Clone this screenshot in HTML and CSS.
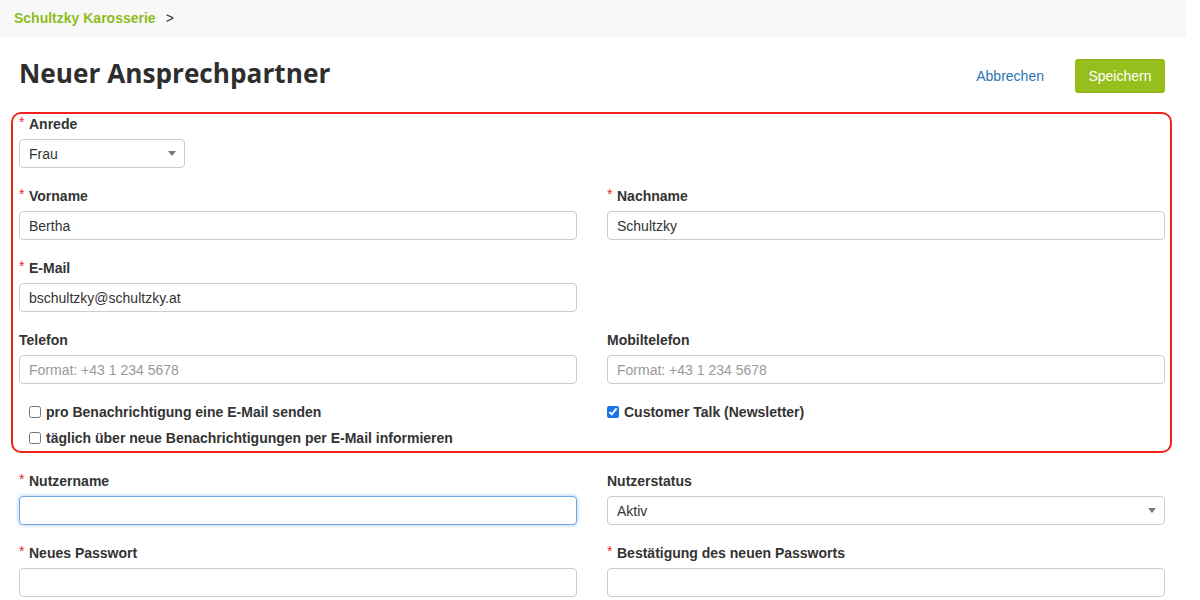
FILE: index.html
```html
<!DOCTYPE html>
<html lang="de">
<head>
    <meta charset="UTF-8">
    <meta name="viewport" content="width=device-width, initial-scale=1.0">
    <title>Neuer Ansprechpartner</title>
    <link rel="stylesheet" href="styles.css">
</head>
<body>
  <div class="page">
    <!-- Breadcrumb -->
    <div class="breadcrumb">
      <a class="breadcrumb-link" href="#">Schultzky Karosserie</a>
      <span class="breadcrumb-sep">&gt;</span>
    </div>

    <div class="content">
      <div class="page-header">
        <h1 class="page-title">Neuer Ansprechpartner</h1>
        <div class="page-actions">
          <a class="link-cancel" href="#">Abbrechen</a>
          <button class="btn-save" type="button">Speichern</button>
        </div>
      </div>

      <!-- Kontaktdaten -->
      <div class="highlight-box">
        <div class="field">
          <label class="field-label required">Anrede</label>
          <div class="select select--small">
            <span class="select-value">Frau</span>
            <span class="select-arrow"></span>
          </div>
        </div>

        <div class="row">
          <div class="field">
            <label class="field-label required">Vorname</label>
            <input class="input" type="text" value="Bertha">
          </div>
          <div class="field">
            <label class="field-label required">Nachname</label>
            <input class="input" type="text" value="Schultzky">
          </div>
        </div>

        <div class="row">
          <div class="field">
            <label class="field-label required">E-Mail</label>
            <input class="input" type="text" value="bschultzky@schultzky.at">
          </div>
          <div class="field"></div>
        </div>

        <div class="row">
          <div class="field">
            <label class="field-label">Telefon</label>
            <input class="input" type="text" placeholder="Format: +43 1 234 5678">
          </div>
          <div class="field">
            <label class="field-label">Mobiltelefon</label>
            <input class="input" type="text" placeholder="Format: +43 1 234 5678">
          </div>
        </div>

        <div class="row row--checks">
          <div class="checks checks--indent">
            <label class="check"><input type="checkbox"> pro Benachrichtigung eine E-Mail senden</label>
            <label class="check"><input type="checkbox"> täglich über neue Benachrichtigungen per E-Mail informieren</label>
          </div>
          <div class="checks">
            <label class="check"><input type="checkbox" checked> Customer Talk (Newsletter)</label>
          </div>
        </div>
      </div>

      <!-- Zugangsdaten -->
      <div class="row">
        <div class="field">
          <label class="field-label required">Nutzername</label>
          <input class="input input--focus" type="text">
        </div>
        <div class="field">
          <label class="field-label">Nutzerstatus</label>
          <div class="select">
            <span class="select-value">Aktiv</span>
            <span class="select-arrow"></span>
          </div>
        </div>
      </div>

      <div class="row">
        <div class="field">
          <label class="field-label required">Neues Passwort</label>
          <input class="input" type="password">
        </div>
        <div class="field">
          <label class="field-label required">Bestätigung des neuen Passworts</label>
          <input class="input" type="password">
        </div>
      </div>
    </div>
  </div>
</body>
</html>
```

FILE: styles.css
```css
html,
body {
  margin: 0;
  padding: 0;
  background: #fff;
  overflow: hidden;
}

body {
  font-family: "Liberation Sans", Arial, Helvetica, sans-serif;
  font-size: 14px;
  color: #333;
}

.page {
  width: 1186px;
}

.breadcrumb {
  background: #f8f8f8;
  height: 37px;
  padding: 0 14px;
  display: flex;
  align-items: center;
  gap: 10px;
  font-weight: bold;
  font-size: 14px;
  padding-bottom: 1px;
  box-sizing: border-box;
}

.breadcrumb-link {
  color: #8cbd1c;
  text-decoration: none;
}

.breadcrumb-sep {
  color: #333;
  font-weight: normal;
}

.content {
  padding: 0 21px 0 19px;
}

.page-header {
  display: flex;
  align-items: center;
  justify-content: space-between;
  height: 75px;
}

.page-title {
  margin: 0;
  font-family: "Open Sans", sans-serif;
  font-weight: 700;
  font-size: 26.2px;
  color: #2e2e2e;
  padding-bottom: 4px;
}

.page-actions {
  display: flex;
  align-items: center;
  gap: 31px;
  padding-top: 2px;
}

.link-cancel {
  color: #2b76b4;
  text-decoration: none;
  font-size: 14px;
}

.btn-save {
  background: #96bf1d;
  color: #fff;
  border: 1px solid #8db51a;
  border-radius: 3px;
  height: 34px;
  padding: 0 12.5px;
  font-family: "Liberation Sans", Arial, sans-serif;
  font-size: 14px;
}

.highlight-box {
  margin: 0 -7px 20px -8px;
  border: 2px solid #f2231b;
  border-radius: 10px;
  padding: 2px 5px 0 6px;
}

.row {
  display: grid;
  grid-template-columns: 1fr 1fr;
  column-gap: 30px;
}

.field {
  display: flex;
  flex-direction: column;
  padding-bottom: 20px;
}

.field-label {
  font-weight: bold;
  line-height: 17px;
  margin-bottom: 6px;
  position: relative;
  padding-left: 10px;
}

.field-label.required:before {
  content: "*";
  position: absolute;
  left: 0;
  top: -2px;
  color: #f0251c;
  font-weight: normal;
  font-size: 14px;
}

.field-label:not(.required) {
  padding-left: 0;
}

.input,
.select {
  box-sizing: border-box;
  height: 29px;
  border: 1px solid #ccc;
  border-radius: 4px;
  padding: 0 9px;
  font-family: "Liberation Sans", Arial, sans-serif;
  font-size: 14px;
  color: #333;
  background: #fff;
  width: 100%;
  margin: 0;
  outline: none;
}

.input::placeholder {
  color: #999;
}

.input--focus {
  border-color: #6fa8e0;
  box-shadow: 0 0 4px rgba(82, 150, 230, 0.55);
}

.select {
  display: flex;
  align-items: center;
  justify-content: space-between;
  padding: 0 8px 0 9px;
}

.select--small {
  width: 166px;
}

.select-arrow {
  width: 0;
  height: 0;
  border-left: 4px solid transparent;
  border-right: 4px solid transparent;
  border-top: 5px solid #777;
}

.row--checks {
  margin-top: -5px;
}

.checks {
  display: flex;
  flex-direction: column;
}

.checks--indent {
  padding-left: 10px;
}

.check {
  display: flex;
  align-items: center;
  gap: 5px;
  font-weight: bold;
  height: 26px;
}

.check input {
  margin: 0;
  width: 12px;
  height: 12px;
  accent-color: #1a73e8;
}
```
